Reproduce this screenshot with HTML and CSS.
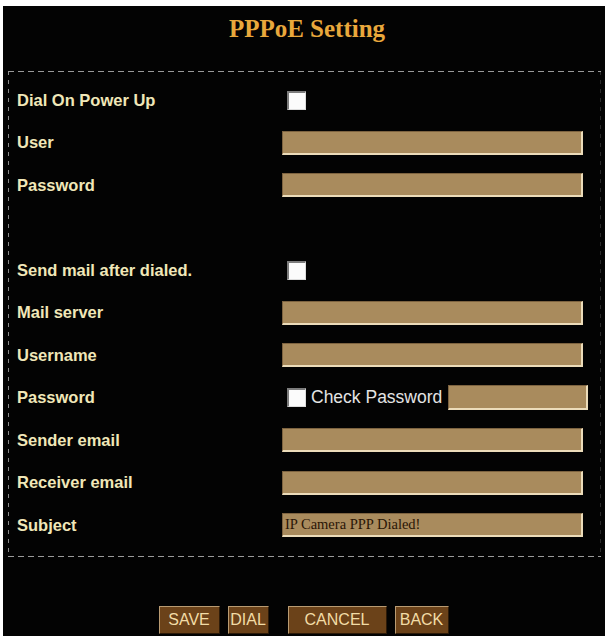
FILE: index.html
```html
<!DOCTYPE html>
<html>
<head>
<meta charset="utf-8">
<title>PPPoE Setting</title>
<link rel="stylesheet" href="styles.css">
</head>
<body>
<div class="screen">
  <h1 class="title">PPPoE Setting</h1>
  <form class="panel">
    <label class="label">Dial On Power Up</label>
    <div class="field"><input class="check" type="checkbox"></div>

    <label class="label">User</label>
    <div class="field"><input class="text" type="text"></div>

    <label class="label">Password</label>
    <div class="field"><input class="text" type="password"></div>

    <div class="spacer"></div>
    <div class="spacer"></div>

    <label class="label">Send mail after dialed.</label>
    <div class="field"><input class="check" type="checkbox"></div>

    <label class="label">Mail server</label>
    <div class="field"><input class="text" type="text"></div>

    <label class="label">Username</label>
    <div class="field"><input class="text" type="text"></div>

    <label class="label">Password</label>
    <div class="field">
      <input class="check" type="checkbox">
      <span class="check-label">Check Password</span>
      <input class="text text-short" type="password">
    </div>

    <label class="label">Sender email</label>
    <div class="field"><input class="text" type="text"></div>

    <label class="label">Receiver email</label>
    <div class="field"><input class="text" type="text"></div>

    <label class="label">Subject</label>
    <div class="field"><input class="text" type="text" value="IP Camera PPP Dialed!"></div>
  </form>
  <div class="actions">
    <button class="btn btn-save" type="button">SAVE</button>
    <button class="btn btn-dial" type="button">DIAL</button>
    <button class="btn btn-cancel" type="button">CANCEL</button>
    <button class="btn btn-back" type="button">BACK</button>
  </div>
</div>
</body>
</html>
```
FILE: styles.css
```css
html, body {
  margin: 0;
  padding: 0;
  background: #ffffff;
}

.screen {
  margin: 6px 1px 0 3px;
  height: 630px;
  background: #030303;
  overflow: hidden;
}

.title {
  margin: 0;
  height: 65px;
  padding-top: 9px;
  box-sizing: border-box;
  text-align: center;
  font-family: "Liberation Serif", "Times New Roman", serif;
  font-weight: bold;
  font-size: 25px;
  line-height: 28px;
  color: #e9a83c;
  padding-left: 6px;
}

/* dashed frame drawn with gradients so the dash length is controllable */
.panel {
  margin: 0 4px 0 5px;
  padding: 8px 0 10px 9px;
  display: grid;
  grid-template-columns: 265px 1fr;
  grid-auto-rows: 42.5px;
  align-items: center;
  background:
    repeating-linear-gradient(to right, #9a9a9a 0 6px, transparent 6px 10px) left top / 100% 1px no-repeat,
    repeating-linear-gradient(to right, #9a9a9a 0 6px, transparent 6px 10px) left bottom / 100% 1px no-repeat,
    repeating-linear-gradient(to bottom, #8a8a8a 0 4px, transparent 4px 9px) left top / 1px 100% no-repeat,
    repeating-linear-gradient(to bottom, #2a2a2a 0 4px, transparent 4px 9px) right top / 1px 100% no-repeat;
}

.label {
  font-family: "Liberation Sans", Arial, sans-serif;
  font-weight: bold;
  font-size: 16.5px;
  color: #f0e7b8;
  white-space: nowrap;
}

.field {
  display: flex;
  align-items: center;
  height: 100%;
}

.check {
  appearance: none;
  -webkit-appearance: none;
  margin: 0 0 0 5px;
  width: 19px;
  height: 19px;
  box-sizing: border-box;
  background: #fbfbfb;
  border-top: 2px solid #7c7c7c;
  border-left: 2px solid #7c7c7c;
  border-right: 1px solid #dcdcdc;
  border-bottom: 1px solid #dcdcdc;
}

.check-label {
  margin-left: 5px;
  font-family: "Liberation Sans", Arial, sans-serif;
  font-size: 17.5px;
  color: #e4e4e4;
  white-space: nowrap;
}

.text {
  margin: 0;
  width: 301px;
  height: 24px;
  box-sizing: border-box;
  padding: 0 2px;
  background: #a98b5d;
  border-top: 1px solid #7d6340;
  border-left: 1px solid #7d6340;
  border-right: 2px solid #ecdcba;
  border-bottom: 2px solid #ecdcba;
  font-family: "Liberation Serif", "Times New Roman", serif;
  font-size: 14.5px;
  color: #2a1606;
  outline: none;
}

.text-short {
  width: 140px;
  height: 25px;
  margin-left: 6px;
}

.actions {
  display: flex;
  justify-content: center;
  gap: 8px;
  margin-top: 49px;
  padding-right: 1px;
}

.btn {
  height: 28px;
  padding: 0;
  box-sizing: border-box;
  background: #6b4219;
  border-top: 1px solid #b99b72;
  border-left: 1px solid #b99b72;
  border-right: 1px solid #2c1a08;
  border-bottom: 1px solid #2c1a08;
  font-family: "Liberation Sans", Arial, sans-serif;
  font-size: 16px;
  color: #f2dca6;
  cursor: pointer;
}

.btn-save { width: 61px; }
.btn-dial { width: 41px; }
.btn-cancel { width: 99px; margin-left: 11px; }
.btn-back { width: 54px; }
```
